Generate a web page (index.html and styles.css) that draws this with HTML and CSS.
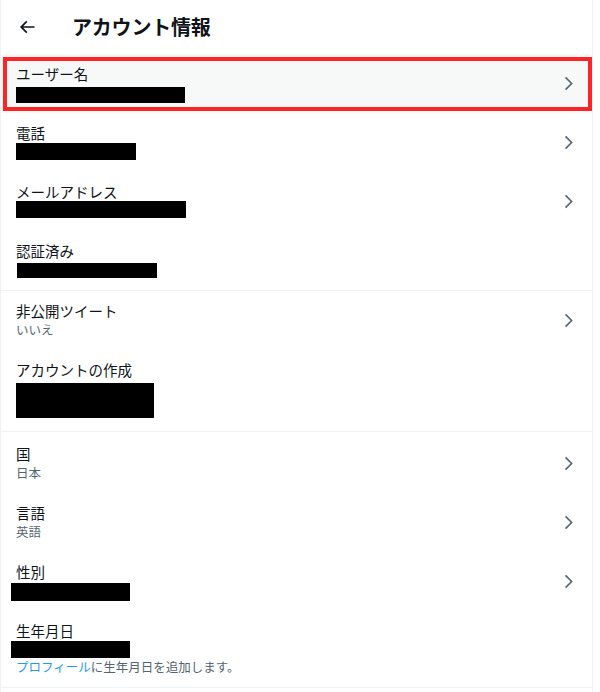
FILE: index.html
```html
<!DOCTYPE html>
<html lang="ja">
<head>
<meta charset="utf-8">
<title>アカウント情報</title>
<link rel="stylesheet" href="styles.css">
</head>
<body>
<div class="page">
  <header class="header">
    <svg class="back" viewBox="0 0 24 24" aria-hidden="true"><path d="M7.414 13l5.043 5.04-1.414 1.42L3.586 12l7.457-7.46 1.414 1.42L7.414 11H21v2H7.414z"/></svg>
    <h1 class="title">アカウント情報</h1>
  </header>

  <section class="section">
    <div class="row row-active">
      <div class="body">
        <div class="label">ユーザー名</div>
        <div class="bar bar-user" style="width:169px"></div>
      </div>
      <svg class="chev" viewBox="0 0 24 24"><path d="M14.586 12L7.543 4.96l1.414-1.42L17.414 12l-8.457 8.46-1.414-1.42L14.586 12z"/></svg>
      <div class="highlight"></div>
    </div>
    <div class="row">
      <div class="body">
        <div class="label">電話</div>
        <div class="bar" style="width:120px"></div>
      </div>
      <svg class="chev" viewBox="0 0 24 24"><path d="M14.586 12L7.543 4.96l1.414-1.42L17.414 12l-8.457 8.46-1.414-1.42L14.586 12z"/></svg>
    </div>
    <div class="row">
      <div class="body">
        <div class="label">メールアドレス</div>
        <div class="bar bar-tight" style="width:170px"></div>
      </div>
      <svg class="chev" viewBox="0 0 24 24"><path d="M14.586 12L7.543 4.96l1.414-1.42L17.414 12l-8.457 8.46-1.414-1.42L14.586 12z"/></svg>
    </div>
    <div class="row">
      <div class="body">
        <div class="label">認証済み</div>
        <div class="bar bar-verified" style="width:140px"></div>
      </div>
    </div>
  </section>

  <section class="section">
    <div class="row">
      <div class="body">
        <div class="label">非公開ツイート</div>
        <div class="sub">いいえ</div>
      </div>
      <svg class="chev" viewBox="0 0 24 24"><path d="M14.586 12L7.543 4.96l1.414-1.42L17.414 12l-8.457 8.46-1.414-1.42L14.586 12z"/></svg>
    </div>
    <div class="row row-tall">
      <div class="body">
        <div class="label">アカウントの作成</div>
        <div class="bar bar-box" style="width:138px"></div>
      </div>
    </div>
  </section>

  <section class="section section-last">
    <div class="row">
      <div class="body">
        <div class="label">国</div>
        <div class="sub">日本</div>
      </div>
      <svg class="chev" viewBox="0 0 24 24"><path d="M14.586 12L7.543 4.96l1.414-1.42L17.414 12l-8.457 8.46-1.414-1.42L14.586 12z"/></svg>
    </div>
    <div class="row">
      <div class="body">
        <div class="label">言語</div>
        <div class="sub">英語</div>
      </div>
      <svg class="chev" viewBox="0 0 24 24"><path d="M14.586 12L7.543 4.96l1.414-1.42L17.414 12l-8.457 8.46-1.414-1.42L14.586 12z"/></svg>
    </div>
    <div class="row">
      <div class="body">
        <div class="label">性別</div>
        <div class="bar bar-shift bar-gender" style="width:119px"></div>
      </div>
      <svg class="chev" viewBox="0 0 24 24"><path d="M14.586 12L7.543 4.96l1.414-1.42L17.414 12l-8.457 8.46-1.414-1.42L14.586 12z"/></svg>
    </div>
    <div class="row row-birth">
      <div class="body">
        <div class="label">生年月日</div>
        <div class="bar bar-shift" style="width:119px"></div>
        <div class="sub"><span class="link">プロフィール</span>に生年月日を追加します。</div>
      </div>
    </div>
  </section>
</div>
</body>
</html>
```

FILE: styles.css
```css
* { box-sizing: border-box; }

html, body {
  margin: 0;
  padding: 0;
  background: #ffffff;
}

body {
  font-family: "Noto Sans CJK JP", "Noto Sans", sans-serif;
  color: #0f1419;
}

.page {
  width: 593px;
  border-left: 1px solid #eff3f4;
  border-right: 1px solid #eff3f4;
  min-height: 692px;
}

.header {
  height: 54px;
  display: flex;
  align-items: center;
  padding-left: 16px;
}

.back {
  width: 20px;
  height: 20px;
  fill: #0f1419;
  flex: none;
}

.title {
  margin: 0 0 0 35px;
  font-size: 20px;
  line-height: 24px;
  font-weight: 700;
  letter-spacing: -0.2px;
}

.section {
  border-bottom: 1px solid #eff3f4;
}

.section-last {
  padding-top: 2px;
}

.row {
  position: relative;
  height: 59px;
  display: flex;
  align-items: center;
  padding: 0 14px 0 15px;
}

.row-active {
  background: #f7f9f9;
}

.row-tall {
  height: 81px;
}

.row-birth {
  height: 76px;
}

.body {
  flex: 1;
  align-self: flex-start;
  padding-top: 9px;
}

.label {
  font-size: 14.5px;
  line-height: 21px;
}

.sub {
  font-size: 12.5px;
  line-height: 18px;
  color: #536471;
}

.link {
  color: #1d9bf0;
}

.bar {
  height: 17px;
  margin-top: 0;
  background: #000000;
}

.bar-user {
  height: 16px;
  margin-top: 3px;
}

.bar-tight {
  margin-top: -1px;
}

.bar-verified {
  height: 15px;
  margin-top: 2px;
  margin-left: 1px;
}

.bar-box {
  height: 35px;
  margin-top: 3px;
}

.bar-shift {
  margin-left: -5px;
}

.bar-gender {
  height: 18px;
  margin-top: 1px;
}

.chev {
  width: 19px;
  height: 19px;
  fill: #536471;
  flex: none;
}

.highlight {
  position: absolute;
  left: 2px;
  right: 0;
  top: 3px;
  bottom: 2px;
  border: 4px solid #fb2525;
  pointer-events: none;
}
```
